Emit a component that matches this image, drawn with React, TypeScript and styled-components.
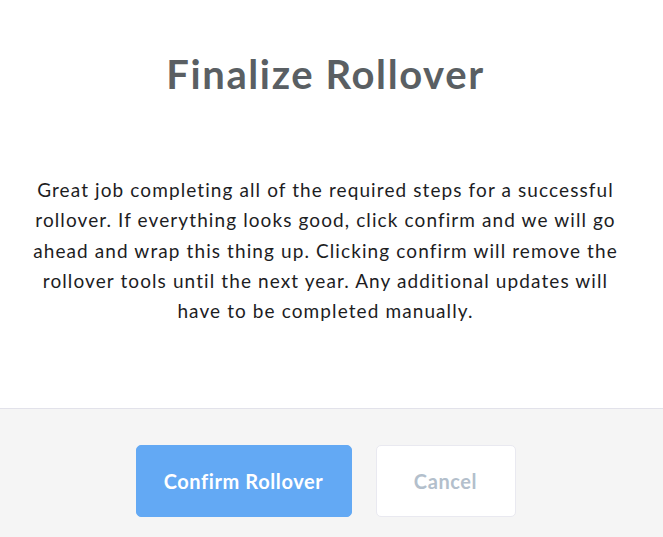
import React from "react";
import styled, { createGlobalStyle } from "styled-components";

const GlobalStyle = createGlobalStyle`
  html, body {
    margin: 0;
    padding: 0;
    background: #ffffff;
  }
  body {
    font-family: Lato, "Noto Sans", sans-serif;
  }
`;

const Modal = styled.div`
  width: 663px;
  height: 537px;
  display: flex;
  flex-direction: column;
  background: #ffffff;
  overflow: hidden;
`;

const Body = styled.div`
  height: 408px;
  box-sizing: border-box;
  padding: 49px 42px 0 30px;
  display: flex;
  flex-direction: column;
  align-items: center;
`;

const Title = styled.h1`
  margin: 0;
  font-size: 40px;
  font-weight: 700;
  letter-spacing: 1.6px;
  color: #5a5f63;
  line-height: 50px;
`;

const Message = styled.p`
  margin: 76px 0 0;
  font-size: 19px;
  letter-spacing: 1.1px;
  line-height: 30.3px;
  color: #1d1d1f;
  text-align: center;
`;

const Footer = styled.div`
  flex: 1;
  background: #f5f5f5;
  border-top: 1px solid #e2e2ea;
  display: flex;
  justify-content: center;
  align-items: flex-start;
  gap: 24px;
  padding: 36px 12px 0 0;
`;

const Button = styled.button<{ $primary?: boolean }>`
  height: 72px;
  width: ${(p) => (p.$primary ? "216px" : "140px")};
  border-radius: 5px;
  font-family: Lato, "Noto Sans", sans-serif;
  font-size: 20px;
  font-weight: 700;
  letter-spacing: 0.6px;
  cursor: pointer;
  background: ${(p) => (p.$primary ? "#63a9f4" : "#ffffff")};
  color: ${(p) => (p.$primary ? "#ffffff" : "#b3bfcc")};
  border: 1px solid ${(p) => (p.$primary ? "#63a9f4" : "#e9e9f0")};
`;

export default function App() {
  return (
    <>
      <GlobalStyle />
      <Modal>
        <Body>
          <Title>Finalize Rollover</Title>
          <Message>
            Great job completing all of the required steps for a successful
            <br />
            rollover. If everything looks good, click confirm and we will go
            <br />
            ahead and wrap this thing up. Clicking confirm will remove the
            <br />
            rollover tools until the next year. Any additional updates will
            <br />
            have to be completed manually.
          </Message>
        </Body>
        <Footer>
          <Button $primary>Confirm Rollover</Button>
          <Button>Cancel</Button>
        </Footer>
      </Modal>
    </>
  );
}
